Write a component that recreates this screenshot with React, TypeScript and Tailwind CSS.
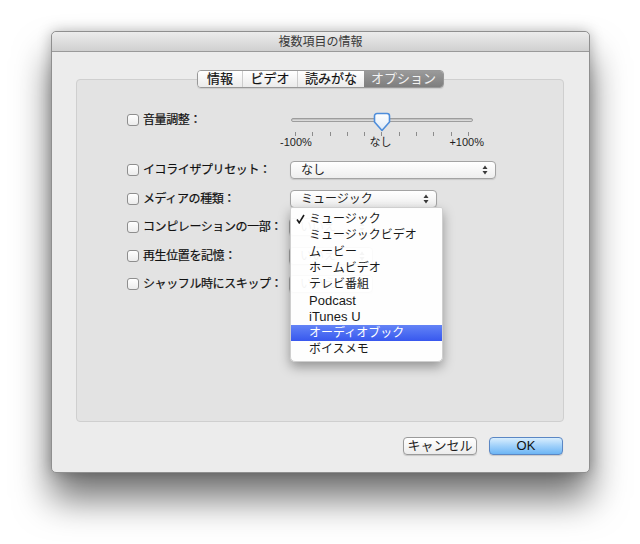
import React from "react";

const mediaTypes = [
  "ミュージック",
  "ミュージックビデオ",
  "ムービー",
  "ホームビデオ",
  "テレビ番組",
  "Podcast",
  "iTunes U",
  "オーディオブック",
  "ボイスメモ",
];

// Up / down arrows for popup buttons
function Arrows() {
  return (
    <svg width="6" height="10" viewBox="0 0 6 10">
      <path d="M3 0.5 L5.5 4 H0.5 Z" fill="#3a3a3a" />
      <path d="M3 9.5 L5.5 6 H0.5 Z" fill="#3a3a3a" />
    </svg>
  );
}

function Checkbox() {
  return (
    <div className="w-[12px] h-[12px] rounded-[3px] border border-[#8e8e8e] bg-linear-to-b from-white to-[#ececec] shadow-[inset_0_1px_0_white]" />
  );
}

function Label({ text }: { text: string }) {
  return (
    <div className="flex items-center gap-[4px]">
      <Checkbox />
      <span className="text-[12px] leading-[14px] tracking-[-0.4px] text-[#111] [-webkit-text-stroke:0.2px_#111]">
        {text}
      </span>
    </div>
  );
}

function Popup({
  value,
  width,
}: {
  value: string;
  width: string;
}) {
  return (
    <div
      className={`${width} h-[18px] flex items-center justify-between pl-[10px] pr-[7px] rounded-[4px] border border-[#a3a3a3] bg-linear-to-b from-white to-[#eeeeee] shadow-[0_1px_1px_rgba(0,0,0,0.12)] text-[12px] text-[#1e1e1e]`}
    >
      <span>{value}</span>
      <Arrows />
    </div>
  );
}

function Thumb() {
  return (
    <svg width="18" height="20" viewBox="0 0 18 20">
      <defs>
        <linearGradient id="thumbFill" x1="0" y1="0" x2="0" y2="1">
          <stop offset="0" stopColor="#ffffff" />
          <stop offset="1" stopColor="#dce9f7" />
        </linearGradient>
      </defs>
      <path
        d="M4 1.5 H14 a2.5 2.5 0 0 1 2.5 2.5 V10 L9 18.5 L1.5 10 V4 a2.5 2.5 0 0 1 2.5 -2.5 Z"
        fill="url(#thumbFill)"
        stroke="#4d8ddb"
        strokeWidth="1.6"
        strokeLinejoin="round"
      />
    </svg>
  );
}

function App() {
  const tabs = [
    { name: "情報", w: "w-[44px]" },
    { name: "ビデオ", w: "w-[55px]" },
    { name: "読みがな", w: "w-[67px]" },
    { name: "オプション", w: "w-[79px]" },
  ];

  return (
    <div className="w-[640px] h-[544px] bg-white pt-[31px] pl-[51px] font-['Liberation_Sans','Noto_Sans_CJK_JP',sans-serif]">

      {/* WINDOW */}
      <div className="w-[539px] h-[442px] rounded-[5px] bg-[#ececec] border border-[#8f8f8f] shadow-[0_26px_36px_rgba(0,0,0,0.55),0_0_14px_rgba(0,0,0,0.25)] flex flex-col">

        {/* TITLE BAR */}
        <div className="h-[20px] rounded-t-[5px] border-b border-[#9a9a9a] bg-linear-to-b from-[#ececec] to-[#d0d0d0] flex items-center justify-center text-[12px] text-[#3a3a3a]">
          複数項目の情報
        </div>

        {/* TABS */}
        <div className="mt-[18px] flex justify-center relative z-10">
          <div className="flex h-[18px] rounded-[4px] border border-[#989898] overflow-hidden shadow-[0_1px_1px_rgba(0,0,0,0.1)]">
            {tabs.map((tab, i) => (
              <div
                key={tab.name}
                className={
                  i === 3
                    ? `${tab.w} flex items-center justify-center text-[13px] bg-linear-to-b from-[#9a9a9a] to-[#7e7e7e] text-[#f2f2f2]`
                    : `${tab.w} flex items-center justify-center text-[13px] bg-linear-to-b from-white to-[#ebebeb] text-[#111] [-webkit-text-stroke:0.2px_#111] ${i > 0 ? "border-l border-[#cdcdcd]" : ""}`
                }
              >
                {tab.name}
              </div>
            ))}
          </div>
        </div>

        {/* GROUP BOX */}
        <div className="relative ml-[24px] -mt-[9px] w-[488px] h-[343px] rounded-[4px] border border-[#cfcfcf] bg-[#e3e3e3] pt-[33px] pl-[50px]">

          {/* VOLUME */}
          <div className="flex items-start">
            <div className="w-[153px]">
              <Label text="音量調整：" />
            </div>

            <div className="relative w-[204px] h-[34px]">
              <div className="mt-[5px] mx-[11px] h-[4px] rounded-full border border-[#9d9d9d] bg-linear-to-b from-[#b9b9b9] to-[#e6e6e6]" />

              <div className="mt-[10px] mx-[15px] h-[4px] flex justify-between">
                {Array.from({ length: 11 }).map((_, i) => (
                  <div key={i} className="w-px h-[4px] bg-[#8c8c8c]" />
                ))}
              </div>

              <div className="flex justify-between text-[11px] leading-[12px] text-[#1e1e1e]">
                <span>-100%</span>
                <span>なし</span>
                <span>+100%</span>
              </div>

              <div className="absolute left-1/2 -translate-x-1/2 -top-[1px]">
                <Thumb />
              </div>
            </div>
          </div>

          {/* POPUP ROWS */}
          <div className="mt-[14px] flex flex-col gap-[10.5px]">
            <div className="flex items-center h-[18px]">
              <div className="w-[163px]">
                <Label text="イコライザプリセット：" />
              </div>
              <Popup value="なし" width="w-[206px]" />
            </div>

            <div className="flex items-center h-[18px]">
              <div className="w-[163px]">
                <Label text="メディアの種類：" />
              </div>
              <Popup value="ミュージック" width="w-[147px]" />
            </div>

            <div className="flex items-center h-[18px]">
              <div className="w-[162px]">
                <Label text="コンピレーションの一部：" />
              </div>
              <Popup value="いいえ" width="w-[84px]" />
            </div>

            <div className="flex items-center h-[18px]">
              <div className="w-[162px]">
                <Label text="再生位置を記憶：" />
              </div>
              <Popup value="いいえ" width="w-[84px]" />
            </div>

            <div className="flex items-center h-[18px]">
              <div className="w-[162px]">
                <Label text="シャッフル時にスキップ：" />
              </div>
              <Popup value="いいえ" width="w-[84px]" />
            </div>
          </div>

          {/* OPEN MENU */}
          <div className="absolute left-[213px] top-[127px] w-[153px] pt-[3px] pb-[4px] rounded-b-[5px] rounded-t-[2px] bg-white/[0.95] border border-[#cfcfcf] shadow-[0_5px_12px_rgba(0,0,0,0.35)] z-20">
            {mediaTypes.map((item, i) => {
              const latin = /^[A-Za-z]/.test(item);

              return (
                <div
                  key={item}
                  className={
                    i === 7
                      ? "relative h-[16.25px] flex items-center pl-[18px] text-[12px] text-white bg-linear-to-b from-[#6483f6] to-[#3857ee]"
                      : latin
                      ? "relative h-[16.25px] flex items-center pl-[18px] text-[13px] text-[#1a1a1a]"
                      : "relative h-[16.25px] flex items-center pl-[18px] text-[12px] text-[#1a1a1a]"
                  }
                >
                  {i === 0 && (
                    <svg
                      className="absolute left-[5px] top-[3px]"
                      width="9"
                      height="10"
                      viewBox="0 0 9 10"
                    >
                      <path
                        d="M1 5.5 L3.2 8.8 L8 1"
                        fill="none"
                        stroke="#1a1a1a"
                        strokeWidth="1.6"
                      />
                    </svg>
                  )}
                  {item}
                </div>
              );
            })}
          </div>
        </div>

        {/* BUTTONS */}
        <div className="mt-[15px] flex justify-end gap-[12px] pr-[26px]">
          <button className="w-[74px] h-[18px] rounded-[4px] border border-[#9a9a9a] bg-linear-to-b from-white to-[#ececec] shadow-[0_1px_1px_rgba(0,0,0,0.15)] text-[13px] leading-[16px] text-[#1e1e1e]">
            キャンセル
          </button>

          <button className="w-[74px] h-[18px] rounded-[4px] border border-[#5b87c4] bg-linear-to-b from-[#d9eefd] via-[#9fd0fa] to-[#6cb5f4] shadow-[0_1px_1px_rgba(0,0,0,0.15)] text-[13px] leading-[16px] text-[#111]">
            OK
          </button>
        </div>
      </div>
    </div>
  );
}

export default App;
